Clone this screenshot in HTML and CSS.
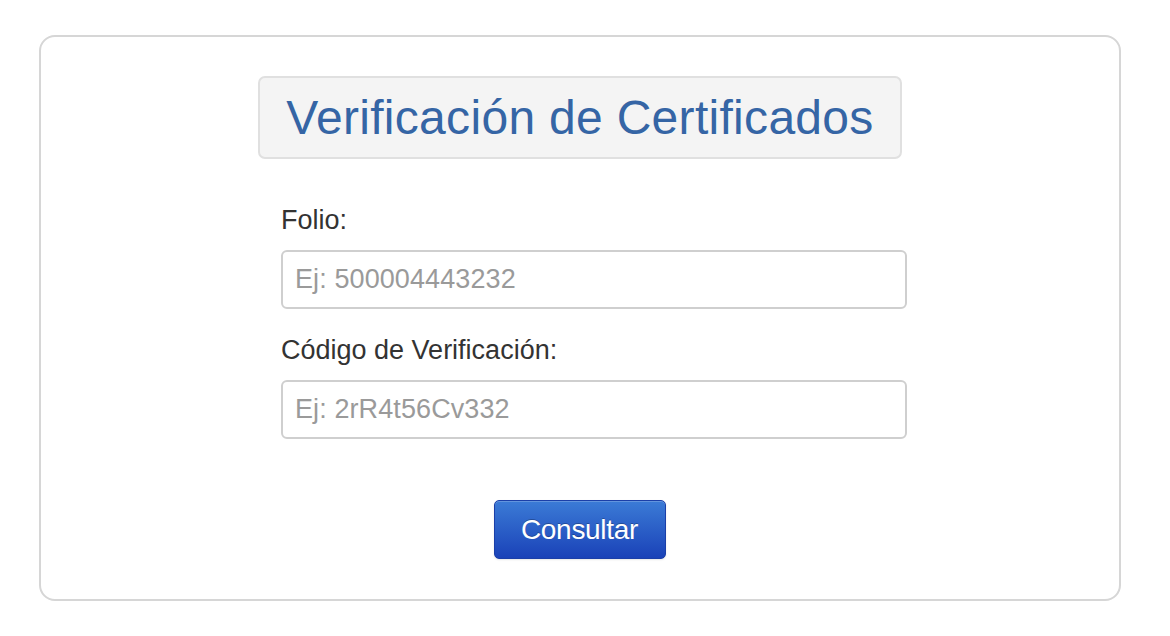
FILE: index.html
```html
<!DOCTYPE html>
<html lang="es">
<head>
<meta charset="utf-8">
<title>Verificación de Certificados</title>
<link rel="stylesheet" href="styles.css">
</head>
<body>
<div class="card">
  <div class="title-box">
    <h1 class="title">Verificación de Certificados</h1>
  </div>
  <form class="form">
    <label class="label" for="folio">Folio:</label>
    <input class="input" id="folio" type="text" placeholder="Ej: 500004443232">
    <label class="label" for="codigo">Código de Verificación:</label>
    <input class="input" id="codigo" type="text" placeholder="Ej: 2rR4t56Cv332">
    <div class="actions">
      <button class="btn" type="button">Consultar</button>
    </div>
  </form>
</div>
</body>
</html>
```

FILE: styles.css
```css
* { box-sizing: border-box; }
html, body { margin: 0; padding: 0; background: #fff; }
body {
  font-family: "Liberation Sans", Arial, Helvetica, sans-serif;
  padding: 35px 49px 0 39px;
}
.card {
  width: 1082px;
  height: 566px;
  border: 2px solid #d6d6d6;
  border-radius: 16px;
  display: flex;
  flex-direction: column;
  align-items: center;
  padding-top: 39px;
}
.title-box {
  width: 644px;
  height: 83px;
  background: #f4f4f4;
  border: 2px solid #e0e0e0;
  border-radius: 7px;
  display: flex;
  align-items: center;
  justify-content: center;
}
.title {
  margin: 0;
  font-weight: normal;
  font-size: 48px;
  line-height: 56px;
  color: #3565a5;
  letter-spacing: 0.3px;
}
.form {
  width: 644px;
  padding-left: 23px;
  margin-top: 45px;
  display: flex;
  flex-direction: column;
}
.label {
  font-size: 27px;
  color: #333;
  line-height: 32px;
  margin-bottom: 14px;
}
.input {
  width: 626px;
  height: 59px;
  border: 2px solid #cfcfcf;
  border-radius: 6px;
  padding: 0 12px;
  font-family: inherit;
  font-size: 27px;
  color: #555;
  margin-bottom: 25px;
  outline: none;
}
.input::placeholder { color: #9a9a9a; letter-spacing: 0.1px; }
.actions {
  display: flex;
  justify-content: center;
  padding-right: 24px;
  margin-top: 36px;
}
.btn {
  width: 172px;
  height: 59px;
  border: 1px solid #1b3fa8;
  border-radius: 5px;
  background: linear-gradient(#3b7bd6, #1a42b8);
  color: #fff;
  font-family: inherit;
  font-size: 28px;
  letter-spacing: -0.3px;
  padding: 0;
  box-shadow: inset 0 1px 0 rgba(255,255,255,0.2), 0 1px 2px rgba(0,0,0,0.1);
  text-shadow: 0 -1px 0 rgba(0,0,0,0.25);
  cursor: pointer;
}
```
